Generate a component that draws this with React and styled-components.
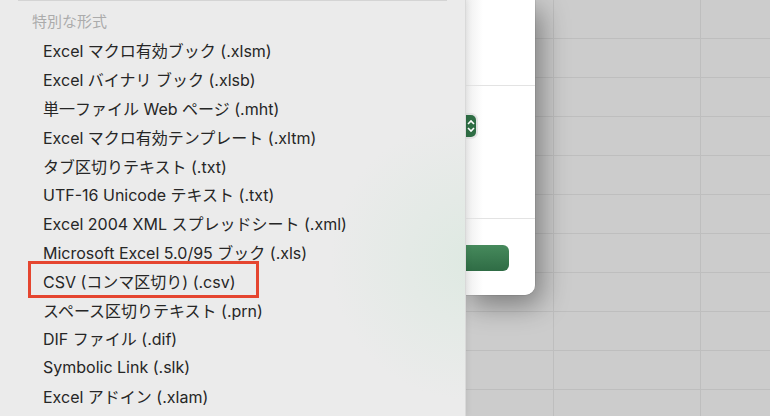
import React from "react";
import styled, { createGlobalStyle } from "styled-components";

const formats = [
  "Excel マクロ有効ブック (.xlsm)",
  "Excel バイナリ ブック (.xlsb)",
  "単一ファイル Web ページ (.mht)",
  "Excel マクロ有効テンプレート (.xltm)",
  "タブ区切りテキスト (.txt)",
  "UTF-16 Unicode テキスト (.txt)",
  "Excel 2004 XML スプレッドシート (.xml)",
  "Microsoft Excel 5.0/95 ブック (.xls)",
  "CSV (コンマ区切り) (.csv)",
  "スペース区切りテキスト (.prn)",
  "DIF ファイル (.dif)",
  "Symbolic Link (.slk)",
  "Excel アドイン (.xlam)",
];

const GlobalStyle = createGlobalStyle`
  html, body {
    margin: 0;
    padding: 0;
    overflow: hidden;
  }
  body {
    font-family: Inter, "Noto Sans CJK JP", sans-serif;
  }
`;

export default function App() {
  return (
    <>
      <GlobalStyle />
      <Screen>
        <Menu>
          <TopRule />
          <SectionTitle>特別な形式</SectionTitle>
          {formats.map((f) => (
            <Item key={f} marked={f.startsWith("CSV")}>
              {f}
            </Item>
          ))}
        </Menu>
        <Dialog>
          <Pane height={85} />
          <Pane height={132}>
            <Stepper>
              <svg width="8" height="14" viewBox="0 0 8 14">
                <path
                  d="M1 5 L4 2 L7 5 M1 9 L4 12 L7 9"
                  stroke="#fff"
                  strokeWidth="1.6"
                  fill="none"
                />
              </svg>
            </Stepper>
          </Pane>
          <Footer>
            <SaveButton />
          </Footer>
        </Dialog>
      </Screen>
    </>
  );
}

const Screen = styled.div`
  width: 770px;
  height: 416px;
  display: flex;
  align-items: flex-start;
  background-color: #cccccc;
  background-image: linear-gradient(#bebebe 1.5px, transparent 1.5px),
    linear-gradient(90deg, #bebebe 1.5px, transparent 1.5px);
  background-size: 147px 39px;
  background-position: 112px 38px;
`;

const Menu = styled.div`
  position: relative;
  z-index: 2;
  width: 465px;
  height: 416px;
  flex-shrink: 0;
  background: radial-gradient(
      circle at 470px 260px,
      rgba(214, 232, 220, 0.6),
      rgba(235, 235, 235, 0) 140px
    ),
    #ebebeb;
  box-shadow: 1px 0 0 #d9d9d9, 2px 0 6px rgba(0, 0, 0, 0.08);
  display: flex;
  flex-direction: column;
`;

const TopRule = styled.div`
  height: 1px;
  margin: 0 18px;
  background: #d4d4d4;
`;

const SectionTitle = styled.div`
  height: 35px;
  box-sizing: border-box;
  padding: 4px 0 0 32px;
  display: flex;
  align-items: center;
  font-size: 15px;
  color: #ababab;
`;

const Item = styled.div`
  position: relative;
  height: 28.8px;
  padding-left: 43px;
  display: flex;
  align-items: center;
  font-size: 16px;
  color: #262626;

  &::after {
    content: "";
    display: ${(p) => (p.marked ? "block" : "none")};
    position: absolute;
    left: 28px;
    top: -5px;
    width: 231px;
    height: 37px;
    box-sizing: border-box;
    border: 3px solid #e5452f;
  }
`;

const Dialog = styled.div`
  position: relative;
  z-index: 1;
  width: 70px;
  height: 295px;
  flex-shrink: 0;
  background: linear-gradient(90deg, #ededed 0, #ffffff 18px);
  border-bottom-right-radius: 10px;
  box-shadow: 6px 10px 28px rgba(0, 0, 0, 0.4), 0 0 0 0.5px #b0b0b0;
  display: flex;
  flex-direction: column;
`;

const Pane = styled.div`
  height: ${(p) => p.height}px;
  border-bottom: 1px solid #e3e3e3;
  display: flex;
  align-items: flex-start;
`;

const Stepper = styled.div`
  width: 11px;
  height: 22px;
  margin-top: 29px;
  border-radius: 0 5px 5px 0;
  background: #2f6e45;
  box-shadow: 0 0 0 2px #e4e4e4;
  display: flex;
  align-items: center;
  justify-content: flex-end;
  overflow: hidden;

  svg {
    margin-right: 1px;
    flex-shrink: 0;
  }
`;

const Footer = styled.div`
  flex: 1;
  display: flex;
  align-items: flex-start;
  padding-top: 26px;
`;

const SaveButton = styled.div`
  width: 44px;
  height: 26px;
  border-radius: 0 6px 6px 0;
  background: linear-gradient(#468a5c, #2f6c45);
`;
